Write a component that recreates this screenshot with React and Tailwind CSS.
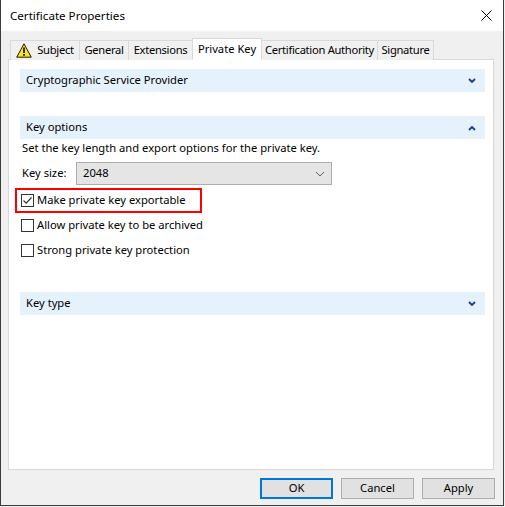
import React from "react";

const font = { fontFamily: '"Segoe UI", "Noto Sans", sans-serif' };

function Chevron({ up }) {
  return (
    <svg width="8" height="6" viewBox="0 0 8 6" className="shrink-0">
      <path
        d={up ? "M1 5 L4 2 L7 5" : "M1 1 L4 4 L7 1"}
        fill="none"
        stroke="#1c3c8c"
        strokeWidth="1.8"
      />
    </svg>
  );
}

function Band({ label, up }) {
  return (
    <div className="h-[23px] bg-[#e5f1fb] flex items-center justify-between pl-[6px] pr-[9px] text-black">
      <span>{label}</span>
      <Chevron up={up} />
    </div>
  );
}

function Check({ checked }) {
  return (
    <div className="w-[13px] h-[13px] border border-[#333333] bg-white flex items-center justify-center shrink-0">
      {checked && (
        <svg width="11" height="11" viewBox="0 0 11 11">
          <path d="M1.5 5.5 L4.2 8.2 L9.5 2.5" fill="none" stroke="#333333" strokeWidth="1.2" />
        </svg>
      )}
    </div>
  );
}

function Warn() {
  return (
    <svg width="16" height="15" viewBox="0 0 16 15" className="shrink-0">
      <path d="M8 0.8 L15.3 14.2 L0.7 14.2 Z" fill="#ffe31a" stroke="#1a1a1a" strokeWidth="1" strokeLinejoin="round" />
      <rect x="7.1" y="4.5" width="1.8" height="5.5" fill="#1a1a1a" />
      <rect x="7.1" y="11" width="1.8" height="1.8" fill="#1a1a1a" />
    </svg>
  );
}

export default function App() {
  const tabs = [
    { label: "Subject", w: "w-[70px]", icon: true },
    { label: "General", w: "w-[50px]" },
    { label: "Extensions", w: "w-[65px]" },
    { label: "Private Key", w: "w-[70px]", sel: true },
    { label: "Certification Authority", w: "w-[117px]" },
    { label: "Signature", w: "w-[57px]" },
  ];
  return (
    <div className="w-[505px] h-[507px] bg-[#f0f0f0] text-black text-[11.2px]" style={font}>
      <div className="w-[504px] h-[506px] border-l border-r border-b border-[#3c3c3c] flex flex-col bg-[#f0f0f0]">
        {/* Title bar */}
        <div className="h-[31px] bg-white flex items-center justify-between pl-[9px] pr-[11px] shrink-0">
          <span className="text-[11.6px] text-black leading-none">Certificate Properties</span>
          <svg width="11" height="11" viewBox="0 0 11 11">
            <path d="M0.5 0.5 L10.5 10.5 M10.5 0.5 L0.5 10.5" stroke="#000" strokeWidth="1" />
          </svg>
        </div>
        {/* Tabs */}
        <div className="flex items-end pl-[9px] pt-[7px] relative z-10 -mb-px">
          {tabs.map((t, i) =>
            t.sel ? (
              <div
                key={i}
                className={`${t.w} shrink-0 -ml-px h-[22px] bg-white border border-[#d9d9d9] border-b-white flex items-start justify-center pt-[2px] whitespace-nowrap relative z-10`}
              >
                {t.label}
              </div>
            ) : (
              <div
                key={i}
                className={`${t.w} shrink-0 -ml-px first:ml-0 h-[20px] bg-[#f0f0f0] border border-[#d9d9d9] border-b-0 flex items-center justify-center gap-[5px] whitespace-nowrap`}
              >
                {t.icon && <Warn />}
                <span className="tracking-[-0.3px]">{t.label}</span>
              </div>
            )
          )}
        </div>
        {/* Panel */}
        <div className="ml-[7px] w-[486px] h-[411px] bg-white border border-[#d9d9d9] pt-[9px] pl-[11px] pr-[8px]">
          <Band label="Cryptographic Service Provider" />
          <div className="mt-[24px]">
            <Band label="Key options" up />
          </div>
          <div className="ml-[2px] mt-[1px] h-[15px] leading-[15px]">
            Set the key length and export options for the private key.
          </div>
          <div className="flex items-center mt-[7px] ml-[2px]">
            <span className="w-[54px]">Key size:</span>
            <div className="w-[256px] h-[23px] bg-[#e5e5e5] border border-[#adadad] flex items-center justify-between pl-[6px] pr-[6px]">
              <span>2048</span>
              <svg width="10" height="6" viewBox="0 0 10 6">
                <path d="M1 1 L5 5 L9 1" fill="none" stroke="#606060" strokeWidth="1" />
              </svg>
            </div>
          </div>
          <div className="mt-[9px] flex flex-col gap-[12px]">
            <div className="relative flex items-center gap-[3px] h-[13px] ml-[1px]">
              <Check checked />
              <span>Make private key exportable</span>
              <div className="absolute -left-[6px] -top-[6px] w-[187px] h-[25px] border-2 border-[#ff0000]" />
            </div>
            <div className="flex items-center gap-[3px] h-[13px] ml-[1px]">
              <Check />
              <span>Allow private key to be archived</span>
            </div>
            <div className="flex items-center gap-[3px] h-[13px] ml-[1px]">
              <Check />
              <span>Strong private key protection</span>
            </div>
          </div>
          <div className="mt-[35px]">
            <Band label="Key type" />
          </div>
        </div>
        {/* Buttons */}
        <div className="flex justify-end gap-[8px] pr-[8px] mt-[8px]">
          <button className="w-[73px] h-[21px] bg-[#e1e1e1] border-2 border-[#0078d7] flex items-center justify-center">OK</button>
          <button className="w-[73px] h-[21px] bg-[#e1e1e1] border border-[#adadad] flex items-center justify-center">Cancel</button>
          <button className="w-[73px] h-[21px] bg-[#e1e1e1] border border-[#adadad] flex items-center justify-center">Apply</button>
        </div>
      </div>
    </div>
  );
}
